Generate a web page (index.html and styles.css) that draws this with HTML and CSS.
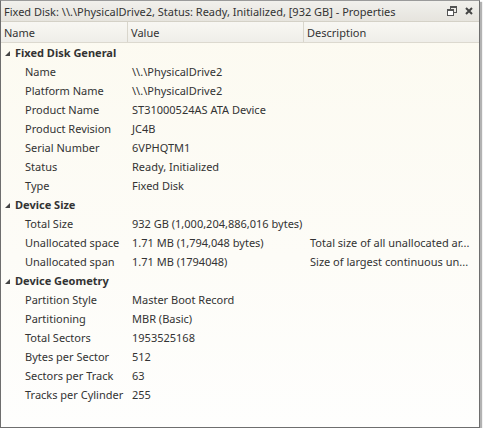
FILE: index.html
```html
<!DOCTYPE html>
<html lang="en">
<head>
    <meta charset="UTF-8">
    <title>Properties</title>
    <link rel="stylesheet" href="styles.css">
</head>
<body>
    <div class="window">
        <div class="title-bar">
            <span class="title">Fixed Disk: \\.\PhysicalDrive2, Status: Ready, Initialized, [932 GB] - Properties</span>
            <div class="title-buttons">
                <svg width="10" height="10" viewBox="0 0 10 10" class="btn-restore">
                    <rect x="3.5" y="0.5" width="6" height="6" fill="none" stroke="#555"/>
                    <rect x="3.5" y="0.5" width="6" height="1.5" fill="#555"/>
                    <rect x="0.5" y="3.5" width="6" height="6" fill="#fff" stroke="#555"/>
                    <rect x="0.5" y="3.5" width="6" height="1.5" fill="#555"/>
                </svg>
                <svg width="8" height="8" viewBox="0 0 8 8" class="btn-close">
                    <path d="M1 1 L7 7 M7 1 L1 7" stroke="#444" stroke-width="2"/>
                </svg>
            </div>
        </div>
        <div class="header">
            <div class="col col-name">Name</div>
            <div class="col col-value">Value</div>
            <div class="col col-desc">Description</div>
        </div>
        <div class="grid" id="grid"></div>
    </div>

    <script>
        const groups = [
            { title: 'Fixed Disk General', rows: [
                ['Name', '\\\\.\\PhysicalDrive2', ''],
                ['Platform Name', '\\\\.\\PhysicalDrive2', ''],
                ['Product Name', 'ST31000524AS ATA Device', ''],
                ['Product Revision', 'JC4B', ''],
                ['Serial Number', '6VPHQTM1', ''],
                ['Status', 'Ready, Initialized', ''],
                ['Type', 'Fixed Disk', '']
            ]},
            { title: 'Device Size', rows: [
                ['Total Size', '932 GB (1,000,204,886,016 bytes)', ''],
                ['Unallocated space', '1.71 MB (1,794,048 bytes)', 'Total size of all unallocated ar...'],
                ['Unallocated span', '1.71 MB (1794048)', 'Size of largest continuous un...']
            ]},
            { title: 'Device Geometry', rows: [
                ['Partition Style', 'Master Boot Record', ''],
                ['Partitioning', 'MBR (Basic)', ''],
                ['Total Sectors', '1953525168', ''],
                ['Bytes per Sector', '512', ''],
                ['Sectors per Track', '63', ''],
                ['Tracks per Cylinder', '255', '']
            ]}
        ];

        const grid = document.getElementById('grid');
        groups.forEach(group => {
            const head = document.createElement('div');
            head.className = 'group';
            head.innerHTML = '<span class="arrow"></span>' + group.title;
            grid.appendChild(head);

            group.rows.forEach(row => {
                const div = document.createElement('div');
                div.className = 'row';
                row.forEach((text, i) => {
                    const cell = document.createElement('div');
                    cell.className = ['cell-name', 'cell-value', 'cell-desc'][i];
                    cell.textContent = text;
                    div.appendChild(cell);
                });
                grid.appendChild(div);
            });
        });
    </script>
</body>
</html>
```

FILE: styles.css
```css
body {
    margin: 0;
    background-color: #fff;
    font-family: 'Noto Sans', 'Open Sans', sans-serif;
    font-size: 11px;
    color: #333;
}
.window {
    width: 478px;
    height: 426px;
    border: 1px solid #6e6e6e;
    border-top-color: #9a9a9a;
    box-shadow: 2px 2px 1px rgba(0, 0, 0, 0.3);
    background: linear-gradient(to bottom, #fcfaf0 0%, #fdfcf7 60%, #fefefd 100%);
    overflow: hidden;
}
.title-bar {
    height: 20px;
    display: flex;
    align-items: center;
    justify-content: space-between;
    padding: 0 6px 0 3px;
    background: linear-gradient(to bottom, #f1f0ec, #e6e4de);
    border-bottom: 1px solid #d4d1c7;
}
.title {
    white-space: nowrap;
}
.title-buttons {
    display: flex;
    align-items: center;
    gap: 8px;
}
.header {
    display: grid;
    grid-template-columns: 127px 176px 1fr;
    height: 20px;
    background: linear-gradient(to bottom, #f8f7f3, #efeee9);
    border-bottom: 1px solid #dcd9cf;
}
.col {
    display: flex;
    align-items: center;
    padding-left: 3px;
    border-right: 1px solid #d9d6cc;
}
.col-desc {
    border-right: none;
}
.group {
    height: 19px;
    display: flex;
    align-items: center;
    font-weight: bold;
    padding-left: 4px;
}
.arrow {
    width: 0;
    height: 0;
    border-left: 5px solid transparent;
    border-bottom: 5px solid #444;
    margin-right: 5px;
    margin-top: 1px;
}
.row {
    display: grid;
    grid-template-columns: 127px 178px 1fr;
    height: 19px;
    align-items: center;
}
.cell-name {
    padding-left: 24px;
    white-space: nowrap;
}
.cell-value {
    padding-left: 4px;
    white-space: nowrap;
}
.cell-desc {
    padding-left: 4px;
    white-space: nowrap;
}
```
